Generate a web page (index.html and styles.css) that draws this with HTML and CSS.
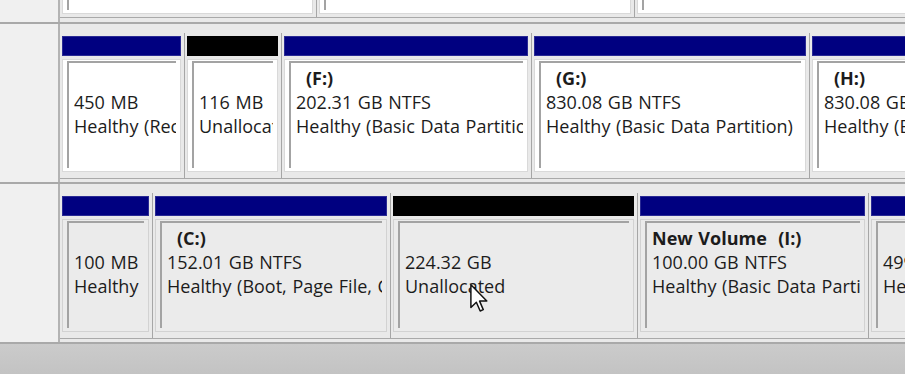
FILE: index.html
```html
<!DOCTYPE html>
<html lang="en">
<head>
  <meta charset="UTF-8">
  <title>Disk Management</title>
  <link rel="stylesheet" href="styles.css">
</head>
<body>

<div class="screen">

  <!-- previous disk, only its bottom edge is visible -->
  <div class="disk disk-prev">
    <div class="disk-info"></div>
    <div class="parts">
      <div class="part" style="width: 257px"><div class="cell"><div class="cell-in"></div></div></div>
      <div class="part" style="width: 318px"><div class="cell"><div class="cell-in"></div></div></div>
      <div class="part last"><div class="cell"><div class="cell-in"></div></div></div>
    </div>
  </div>

  <div class="disk">
    <div class="disk-info"></div>
    <div class="parts">
      <div class="part" style="width: 125px">
        <div class="bar"></div>
        <div class="cell"><div class="cell-in">
          <div class="line"></div>
          <div class="line">450 MB</div>
          <div class="line">Healthy (Recovery Partition)</div>
        </div></div>
      </div>
      <div class="part" style="width: 97px">
        <div class="bar free"></div>
        <div class="cell"><div class="cell-in">
          <div class="line"></div>
          <div class="line">116 MB</div>
          <div class="line">Unallocated</div>
        </div></div>
      </div>
      <div class="part" style="width: 250px">
        <div class="bar"></div>
        <div class="cell"><div class="cell-in">
          <div class="line name no-name">(F:)</div>
          <div class="line">202.31 GB NTFS</div>
          <div class="line">Healthy (Basic Data Partition)</div>
        </div></div>
      </div>
      <div class="part" style="width: 278px">
        <div class="bar"></div>
        <div class="cell"><div class="cell-in">
          <div class="line name no-name">(G:)</div>
          <div class="line">830.08 GB NTFS</div>
          <div class="line">Healthy (Basic Data Partition)</div>
        </div></div>
      </div>
      <div class="part last">
        <div class="bar"></div>
        <div class="cell"><div class="cell-in">
          <div class="line name no-name">(H:)</div>
          <div class="line">830.08 GB NTFS</div>
          <div class="line">Healthy (Basic Data Partition)</div>
        </div></div>
      </div>
    </div>
  </div>

  <div class="disk disk-gray">
    <div class="disk-info"></div>
    <div class="parts">
      <div class="part" style="width: 93px">
        <div class="bar"></div>
        <div class="cell"><div class="cell-in">
          <div class="line"></div>
          <div class="line">100 MB</div>
          <div class="line">Healthy (EFI System Partition)</div>
        </div></div>
      </div>
      <div class="part" style="width: 238px">
        <div class="bar"></div>
        <div class="cell"><div class="cell-in">
          <div class="line name no-name">(C:)</div>
          <div class="line">152.01 GB NTFS</div>
          <div class="line">Healthy (Boot, Page File, Crash Dump, Basic Data Partition)</div>
        </div></div>
      </div>
      <div class="part" style="width: 247px">
        <div class="bar free"></div>
        <div class="cell"><div class="cell-in">
          <div class="line"></div>
          <div class="line">224.32 GB</div>
          <div class="line">Unallocated</div>
        </div></div>
      </div>
      <div class="part" style="width: 231px">
        <div class="bar"></div>
        <div class="cell"><div class="cell-in">
          <div class="line name">New Volume&nbsp; (I:)</div>
          <div class="line">100.00 GB NTFS</div>
          <div class="line">Healthy (Basic Data Partition)</div>
        </div></div>
      </div>
      <div class="part last">
        <div class="bar"></div>
        <div class="cell"><div class="cell-in">
          <div class="line"></div>
          <div class="line">499.98 GB NTFS</div>
          <div class="line">Healthy (Basic Data Partition)</div>
        </div></div>
      </div>
    </div>
  </div>

  <div class="bottom-strip"></div>

  <svg class="cursor" width="18" height="28" viewBox="0 0 12 19">
    <path d="M0.5 0.5 L0.5 16 L4.2 12.4 L6.8 18.3 L8.9 17.4 L6.4 11.6 L11.3 11.6 Z" fill="#fff" stroke="#111" stroke-width="1" stroke-linejoin="round"/>
  </svg>

</div>

</body>
</html>
```

FILE: styles.css
```css
body {
  margin: 0;
  font-family: "Open Sans", "Noto Sans", sans-serif;
  font-size: 18px;
  word-spacing: 1px;
  color: #1c1c1c;
  background-color: #c6c6c6;
  overflow: hidden;
}

.screen {
  position: relative;
  width: 905px;
  height: 374px;
  overflow: hidden;
}

.disk {
  display: flex;
  height: 158px;
  border-bottom: 2px solid #a9a9a9;
  background-color: #e9e9e9;
}

.disk-prev {
  height: 22px;
}

.disk-info {
  width: 58px;
  flex-shrink: 0;
  background-color: #f0f0f0;
  border-right: 2px solid #b3b3b3;
}

.parts {
  display: flex;
  flex: 1;
  min-width: 0;
  overflow: hidden;
  margin-bottom: 3px;
  border-bottom: 1px solid #a9a9a9;
}

.part {
  box-sizing: border-box;
  flex-shrink: 0;
  display: flex;
  flex-direction: column;
  margin-top: 9px;
  padding: 3px 3px 6px 2px;
  border-right: 1px solid #a6a6a6;
}

/* the last partition runs on past the window edge */
.part.last {
  width: 300px;
}

.disk-prev .part {
  margin-top: 0;
  padding-top: 0;
  padding-bottom: 3px;
}

.disk-prev .parts {
  margin-bottom: 4px;
}

.bar {
  height: 20px;
  background-color: #000080;
  box-shadow: inset 0 0 0 1px #2a2a94;
}

.bar.free {
  background-color: #000;
  box-shadow: none;
}

.cell {
  box-sizing: border-box;
  height: 113px;
  margin-top: 3px;
  padding: 1px 4px 3px 4px;
  background-color: #fff;
  border: 1px solid #d9d9d9;
}

.disk-prev .cell {
  height: 14px;
  margin-top: 0;
  border-top: none;
  padding-top: 0;
}

.disk-prev .cell-in {
  border-top: none;
}

.disk-gray .cell {
  background-color: #ebebeb;
  border-color: #d2d2d2;
}

.cell-in {
  box-sizing: border-box;
  height: 100%;
  padding: 3px 0 0 5px;
  border-top: 2px solid #a3a3a3;
  border-left: 2px solid #a3a3a3;
  overflow: hidden;
  white-space: nowrap;
}

.line {
  height: 24px;
  line-height: 24px;
}

.name {
  font-weight: bold;
}

.no-name {
  padding-left: 10px;
}

.bottom-strip {
  height: 30px;
  background: linear-gradient(#cbcbcb, #c3c3c3);
}

.cursor {
  position: absolute;
  left: 470px;
  top: 284px;
}
```
